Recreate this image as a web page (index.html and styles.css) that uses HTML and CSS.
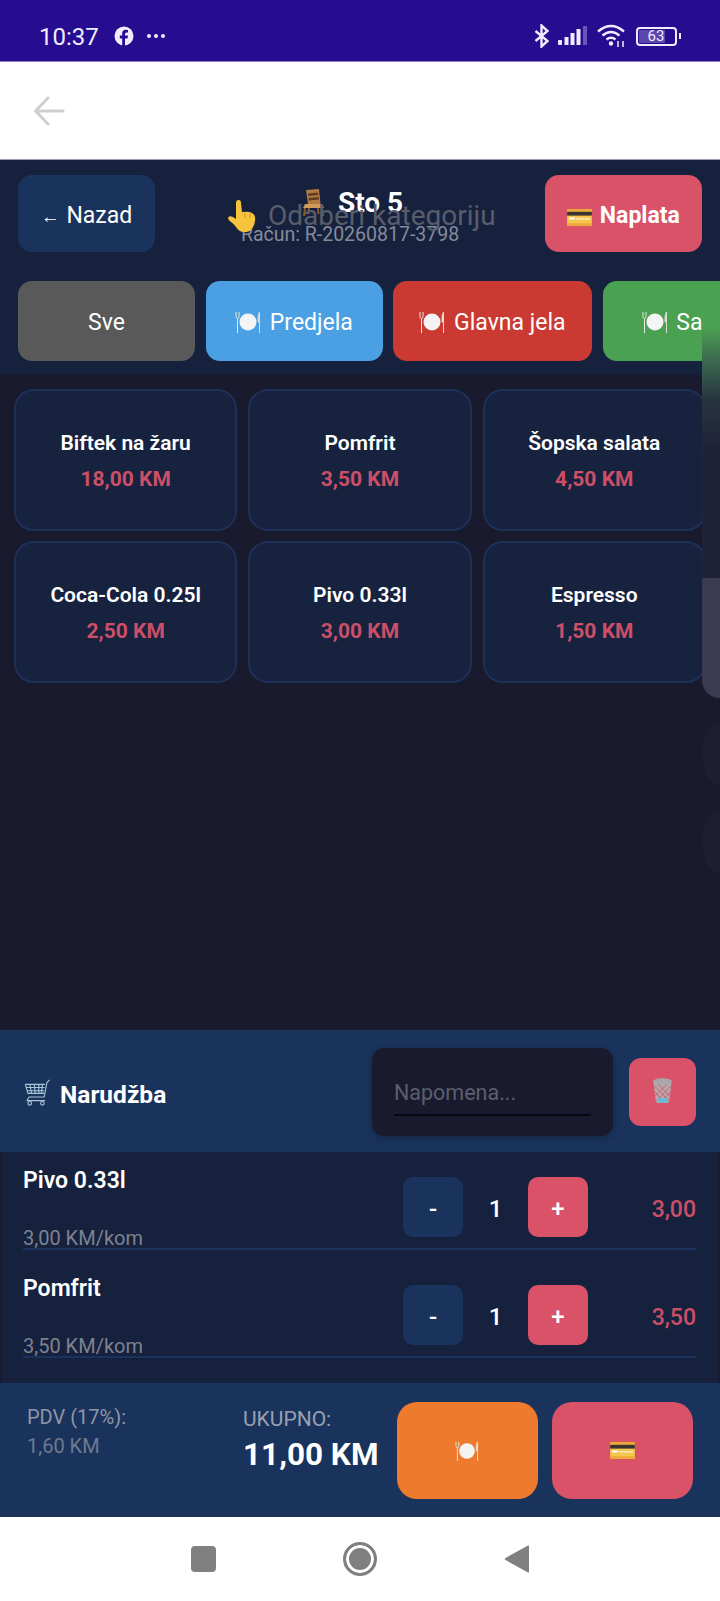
FILE: index.html
```html
<!DOCTYPE html>
<html lang="bs">
<head>
  <meta charset="UTF-8">
  <meta name="viewport" content="width=device-width, initial-scale=1">
  <title>Sto 5</title>
  <link rel="stylesheet" href="styles.css">
</head>
<body>
  <svg class="defs" width="0" height="0">
    <symbol id="plate" viewBox="0 0 26 24">
      <circle cx="13" cy="12" r="8.500" fill="#f4f4f4"/>
      <path d="M1 2v4.500q0 2 1.500 2t1.500-2V2M2.500 8.500V23" stroke="#e8e8e0" stroke-width="1" fill="none"/>
      <path d="M24.500 2q-2 3-1.500 10h1.500zM24.500 2v21" stroke="#dcdcd0" stroke-width="1" fill="#dcdcd0"/>
    </symbol>
    <symbol id="card" viewBox="0 0 26 20">
      <rect x="0" y="1" width="26" height="18" rx="1.500" fill="#f6c64f"/>
      <rect x="0" y="1" width="26" height="3" fill="#e9a83a"/>
      <rect x="0" y="4" width="26" height="4" fill="#3a3330"/>
      <rect x="2" y="10" width="6" height="2" fill="#fff"/>
      <rect x="9" y="11" width="15" height="1" fill="#fff"/>
      <rect x="0" y="16" width="26" height="3" fill="#eeaa3c"/>
    </symbol>
  </svg>

  <div class="statusbar">
    <div class="status-left">
      <span class="time">10:37</span>
      <svg class="fb" width="20" height="20" viewBox="0 0 20 20">
        <circle cx="10" cy="10" r="9.500" fill="#f0ecff"/>
        <path d="M11 20v-7.500h2.500l.5-3h-3V8q0-1.500 1.600-1.500H14V4q-1-.2-2.200-.2Q8.200 3.800 8.200 7.500v2H5.800v3h2.400V20z" fill="#260c8f"/>
      </svg>
      <span class="dots"><i></i><i></i><i></i></span>
    </div>
    <div class="status-right">
      <svg width="16" height="24" viewBox="0 0 16 24" fill="none" stroke="#f0ecff" stroke-width="2.400">
        <path d="M1.500 7l12 10-6 5.500V1.500l6 5.500-12 10"/>
      </svg>
      <svg class="signal" width="30" height="20" viewBox="0 0 30 20" fill="#f0ecff">
        <rect x="0" y="14" width="4" height="5" rx="1"/>
        <rect x="6.500" y="11" width="4" height="8"/>
        <rect x="12.500" y="7" width="4" height="12"/>
        <rect x="18.500" y="3" width="4" height="16"/>
        <rect x="25" y="0" width="4" height="19" fill="#6a55b8"/>
      </svg>
      <svg class="wifi" width="30" height="24" viewBox="0 0 30 24" fill="none" stroke="#f0ecff" stroke-width="2.600">
        <path d="M1 7.500q13-11 26 0M5.500 11.500q8.500-7 17 0M9.500 15.500q4.500-3.500 9 0"/>
        <circle cx="14" cy="19.500" r="2.200" fill="#f0ecff" stroke="none"/>
        <path d="M21 17v6M26 17v6" stroke-width="1.500"/>
      </svg>
      <div class="battery"><div class="battery-body"><span class="battery-fill">63</span></div><i class="battery-tip"></i></div>
    </div>
  </div>

  <div class="appbar">
    <svg width="32" height="30" viewBox="0 0 32 30" fill="none" stroke="#cfcfcf" stroke-width="3" stroke-linecap="round" stroke-linejoin="round">
      <path d="M30 15H3M15 2L2.500 15 15 28"/>
    </svg>
  </div>

  <div class="top">
    <div class="top-row">
      <button class="btn btn-back"><span class="arrow">←</span> Nazad</button>
      <div class="title">
        <div class="title-main">
          <svg width="21" height="27" viewBox="0 0 21 27">
            <path d="M3 1l13-1 1.500 15H5z" fill="#b07a42"/>
            <path d="M5 4.500l10-1 .4 2.500-10 1zM5.600 9l10-1 .4 2.500-10 1z" fill="#5e3c20"/>
            <path d="M2 15h17l2 4H0z" fill="#d09a58"/>
            <path d="M2 19l-1 8M19 19l1 8M6 19l-.5 6M15 19l.5 6" stroke="#8a5a2c" stroke-width="2"/>
          </svg>
          <span>Sto 5</span>
        </div>
        <div class="title-sub">Račun: R-20260817-3798</div>
      </div>
      <button class="btn btn-pay"><svg class="emoji" width="25" height="19"><use href="#card"/></svg> Naplata</button>
      <div class="hint">
        <svg width="28" height="32" viewBox="0 0 28 32">
          <path d="M8 3q0-3 2.500-3t2.500 3l1 9q7-1 10 1 4 2 3 8-1 6-4 9-2 2-7 2-5 0-8-5-2-3-5-5-3-2-3-4 1-3 5-1l3 2z" fill="#f7c23c"/>
          <path d="M17 13v5M22 14v4" stroke="#d99a1e" stroke-width="1.200"/>
        </svg>
        <span>Odaberi kategoriju</span>
      </div>
    </div>
    <div class="cats">
      <button class="cat cat-all">Sve</button>
      <button class="cat cat-start"><svg class="emoji" width="26" height="24"><use href="#plate"/></svg> Predjela</button>
      <button class="cat cat-main"><svg class="emoji" width="26" height="24"><use href="#plate"/></svg> Glavna jela</button>
      <button class="cat cat-salad"><svg class="emoji" width="26" height="24"><use href="#plate"/></svg> Salate</button>
    </div>
  </div>

  <div class="products">
    <div class="product"><div class="product-name">Biftek na žaru</div><div class="product-price">18,00 KM</div></div>
    <div class="product"><div class="product-name">Pomfrit</div><div class="product-price">3,50 KM</div></div>
    <div class="product"><div class="product-name">Šopska salata</div><div class="product-price">4,50 KM</div></div>
    <div class="product"><div class="product-name">Coca-Cola 0.25l</div><div class="product-price">2,50 KM</div></div>
    <div class="product"><div class="product-name">Pivo 0.33l</div><div class="product-price">3,00 KM</div></div>
    <div class="product"><div class="product-name">Espresso</div><div class="product-price">1,50 KM</div></div>
  </div>

  <div class="order-head">
    <div class="order-title">
      <svg width="28" height="27" viewBox="0 0 30 30" fill="none" stroke="#a9c6d8" stroke-width="1.200">
        <path d="M29 1l-3 3-3 16H6M2 6h22M2 6l3 10h18M3 9.500h20.500M4 13h19M7 6l2 10M12 6l1 10M17 6v10M21 6l-1 10"/>
        <path d="M6 20l-2 4h20"/>
        <circle cx="7" cy="27" r="2"/><circle cx="21" cy="27" r="2"/>
      </svg>
      <span>Narudžba</span>
    </div>
    <div class="note"><div class="note-field">Napomena...</div></div>
    <button class="btn-trash">
      <svg width="25" height="27" viewBox="0 0 24 30">
        <path d="M2 6h20l-2.500 21q-.3 2-2.500 2H7q-2.200 0-2.500-2z" fill="#b9a5ae"/>
        <path d="M3 10l17 17M7 8l14 14M3 16l11 12M21 10L5 27M17 8L3 22M21 16L10 28" stroke="#c8606e" stroke-width="1"/>
        <ellipse cx="12" cy="5" rx="10.500" ry="3.500" fill="#a8a8ac"/>
        <ellipse cx="12" cy="26" rx="6" ry="3" fill="#66bcd8"/>
      </svg>
    </button>
  </div>

  <div class="order-list">
    <div class="row">
      <div class="row-info"><div class="row-name">Pivo 0.33l</div><div class="row-unit">3,00 KM/kom</div></div>
      <div class="qty"><button class="qty-btn qty-minus">-</button><span class="qty-num">1</span><button class="qty-btn qty-plus">+</button></div>
      <div class="row-total">3,00</div>
    </div>
    <div class="row">
      <div class="row-info"><div class="row-name">Pomfrit</div><div class="row-unit">3,50 KM/kom</div></div>
      <div class="qty"><button class="qty-btn qty-minus">-</button><span class="qty-num">1</span><button class="qty-btn qty-plus">+</button></div>
      <div class="row-total">3,50</div>
    </div>
  </div>

  <div class="totals">
    <div class="vat"><div>PDV (17%):</div><div class="vat-value">1,60 KM</div></div>
    <div class="sum"><div class="sum-label">UKUPNO:</div><div class="sum-value">11,00 KM</div></div>
    <button class="action action-kitchen"><svg class="emoji" width="24" height="22"><use href="#plate"/></svg></button>
    <button class="action action-pay"><svg class="emoji" width="25" height="19"><use href="#card"/></svg></button>
  </div>

  <div class="navbar">
    <i class="nav-square"></i>
    <i class="nav-circle"></i>
    <svg width="26" height="30" viewBox="0 0 26 30"><path d="M24 1.500q1-.5 1 1v25q0 1.500-1 1L1.500 16q-1.500-1 0-2z" fill="#808080"/></svg>
  </div>

  <div class="edge">
    <div class="edge-panel"></div>
    <div class="edge-dot"></div>
    <div class="edge-dot"></div>
  </div>
</body>
</html>
```

FILE: styles.css
```css
* {
  box-sizing: border-box;
}
html, body {
  margin: 0;
  padding: 0;
}
body {
  width: 720px;
  height: 1601px;
  position: relative;
  overflow: hidden;
  display: flex;
  flex-direction: column;
  font-family: Roboto, "Liberation Sans", sans-serif;
  background: #1a1a2e;
  color: #fff;
}
button {
  font-family: inherit;
  border: 0;
  color: #fff;
  padding: 0;
}
.defs {
  position: absolute;
}
.emoji {
  vertical-align: -4px;
}

/* status bar */
.statusbar {
  height: 62px;
  flex: none;
  background: #260c8f;
  border-bottom: 1px solid #8f84cc;
  display: flex;
  justify-content: space-between;
  align-items: center;
  padding: 11px 39px 0 39px;
  color: #f0ecff;
}
.status-left, .status-right {
  display: flex;
  align-items: center;
}
.time {
  font-size: 24px;
  margin-right: 15px;
  padding-top: 1px;
}
.dots {
  display: flex;
  gap: 3px;
  margin-left: 13px;
}
.dots i {
  width: 4px;
  height: 4px;
  border-radius: 50%;
  background: #f0ecff;
}
.signal {
  margin-left: 8px;
}
.wifi {
  margin-left: 9px;
}
.battery {
  display: flex;
  align-items: center;
  margin-left: 9px;
}
.battery-body {
  width: 41px;
  height: 19px;
  border: 2px solid #f0ecff;
  border-radius: 4px;
  padding: 1px;
}
.battery-fill {
  display: block;
  width: 26px;
  height: 13px;
  background: #5a46ad;
  border-radius: 1px;
  font-size: 15px;
  line-height: 13px;
  text-align: center;
  padding-left: 8px;
  white-space: nowrap;
}
.battery-tip {
  width: 2px;
  height: 6px;
  margin-left: 2px;
  background: #f0ecff;
}

/* app bar */
.appbar {
  height: 98px;
  flex: none;
  background: #fff;
  display: flex;
  align-items: center;
  padding-left: 33px;
  border-bottom: 1px solid #9aa0b0;
}

/* top */
.top {
  height: 215px;
  flex: none;
  background: #16213e;
  padding: 15px 0 0 18px;
}
.top-row {
  height: 77px;
  position: relative;
  display: flex;
  justify-content: space-between;
  align-items: center;
  padding-right: 18px;
}
.btn {
  height: 77px;
  border-radius: 14px;
  font-size: 23px;
  padding-top: 3px;
}
.btn-back {
  width: 137px;
  background: #1a335c;
}
.arrow {
  font-size: 19px;
  margin-right: 1px;
}
.btn-pay {
  width: 157px;
  background: #d95268;
  font-weight: 700;
}
.btn-pay .emoji {
  margin-right: 2px;
}
.title {
  text-align: center;
  margin-top: 4px;
}
.title-main {
  display: flex;
  justify-content: center;
  align-items: center;
  gap: 14px;
  padding-left: 6px;
  font-size: 28px;
  font-weight: 700;
  height: 34px;
}
.title-sub {
  font-size: 19.5px;
  line-height: 23px;
  color: #858a99;
  margin-top: 4px;
}
.hint {
  position: absolute;
  left: 210px;
  top: 24px;
  display: flex;
  align-items: center;
  gap: 12px;
  font-size: 28px;
  color: #585d6b;
}
.cats {
  display: flex;
  gap: 10.5px;
  margin-top: 29px;
  overflow: hidden;
}
.cat {
  flex: none;
  width: 177px;
  height: 80px;
  border-radius: 14px;
  font-size: 23px;
  padding-top: 2px;
}
.cat .emoji {
  margin-right: 3px;
}
.cat-all {
  background: #595959;
}
.cat-start {
  background: #4aa0e2;
}
.cat-main {
  width: 199px;
  background: #cb3a32;
}
.cat-salad {
  background: #4aa152;
}

/* products */
.products {
  flex: 1;
  display: grid;
  grid-template-columns: repeat(3, 223.3px);
  grid-auto-rows: 142px;
  gap: 10px 11px;
  padding: 14px 0 0 14px;
}
.product {
  background: #17223f;
  border: 2px solid #1c3058;
  border-radius: 20px;
  text-align: center;
  padding-top: 39px;
}
.product-name {
  font-size: 21px;
  font-weight: 600;
  line-height: 26px;
}
.product-price {
  font-size: 21px;
  font-weight: 700;
  color: #cc4f68;
  line-height: 26px;
  margin-top: 10px;
}

/* order */
.order-head {
  height: 122px;
  flex: none;
  background: #1a335c;
  display: flex;
  align-items: center;
  padding: 2px 24px 0 23px;
}
.order-title {
  flex: 1;
  display: flex;
  align-items: center;
  gap: 9px;
  font-size: 24.5px;
  font-weight: 700;
}
.order-title span {
  padding-top: 4px;
}
.note {
  width: 241px;
  height: 88px;
  background: #1a1a2e;
  border-radius: 12px;
  box-shadow: 0 2px 6px rgba(0, 0, 0, 0.25);
  padding: 22px 22px 0;
}
.note-field {
  height: 46px;
  padding-top: 2px;
  font-size: 21.5px;
  line-height: 42px;
  color: #5b5f6e;
  border-bottom: 2px solid #07070f;
}
.btn-trash {
  width: 67px;
  height: 68px;
  margin-left: 16px;
  border-radius: 12px;
  background: #d95268;
}
.order-list {
  height: 231px;
  flex: none;
  margin: 0 2px;
  background: #16213e;
  padding: 0 22px 0 21px;
}
.row {
  height: 98px;
  margin-bottom: 10px;
  display: flex;
  border-bottom: 2px solid #1a335c;
}
.row-info {
  flex: 1;
  display: flex;
  flex-direction: column;
  justify-content: space-between;
  padding-top: 15px;
}
.row-name {
  font-size: 23px;
  font-weight: 600;
}
.row-unit {
  font-size: 20px;
  color: #7d8290;
  margin-bottom: -2px;
}
.qty {
  display: flex;
  align-items: center;
  height: 60px;
  margin-top: 25px;
}
.qty-btn {
  width: 60px;
  height: 60px;
  border-radius: 10px;
  font-size: 24px;
  font-weight: 500;
  padding-top: 3px;
}
.qty-minus {
  background: #1a335c;
}
.qty-plus {
  background: #d95268;
}
.qty-num {
  width: 65px;
  text-align: center;
  font-size: 24px;
  font-weight: 500;
  padding-top: 3px;
}
.row-total {
  width: 108px;
  text-align: right;
  font-size: 23px;
  font-weight: 500;
  color: #cc4f68;
  margin-top: 44px;
}

/* totals */
.totals {
  height: 134px;
  flex: none;
  background: #1a335c;
  display: flex;
  padding: 19px 27px 0;
}
.vat {
  width: 216px;
  font-size: 20px;
  color: #8f96a6;
  line-height: 24px;
  padding-top: 3px;
}
.vat-value {
  color: #707990;
  margin-top: 5px;
}
.sum {
  width: 153.5px;
}
.sum-label {
  font-size: 21px;
  color: #98a0b0;
  margin-top: 5px;
}
.sum-value {
  font-size: 31.5px;
  font-weight: 700;
  margin-top: 5px;
}
.action {
  width: 141px;
  height: 97px;
  border-radius: 20px;
  margin-left: 14px;
}
.action-kitchen {
  background: #ee7a2e;
  margin-left: 0;
}
.action-pay {
  background: #d95268;
}

/* nav bar */
.navbar {
  height: 84px;
  flex: none;
  background: #fff;
  display: flex;
  align-items: center;
  justify-content: center;
  gap: 127px;
}
.nav-square {
  width: 25px;
  height: 26px;
  border-radius: 4px;
  background: #808080;
}
.nav-circle {
  width: 34px;
  height: 34px;
  border-radius: 50%;
  background: #808080;
  border: 3px solid #808080;
  box-shadow: inset 0 0 0 3px #fff;
}

/* edge panel over the right side */
.edge {
  position: absolute;
  right: 0;
  top: 300px;
  width: 18px;
}
.edge-panel {
  height: 398px;
  margin-bottom: 4px;
  border-bottom-left-radius: 18px;
  background: linear-gradient(to bottom, #4aa152 0, #4aa152 27px, #3c6a50 60px, #27343f 100px, #1f2238 150px, #1f2238 278px, #3a3b50 278px, #3a3b50 398px);
}
.edge-dot {
  width: 36px;
  height: 65px;
  border-radius: 50%;
  margin-top: 23px;
  background: #1e1e33;
}
```
